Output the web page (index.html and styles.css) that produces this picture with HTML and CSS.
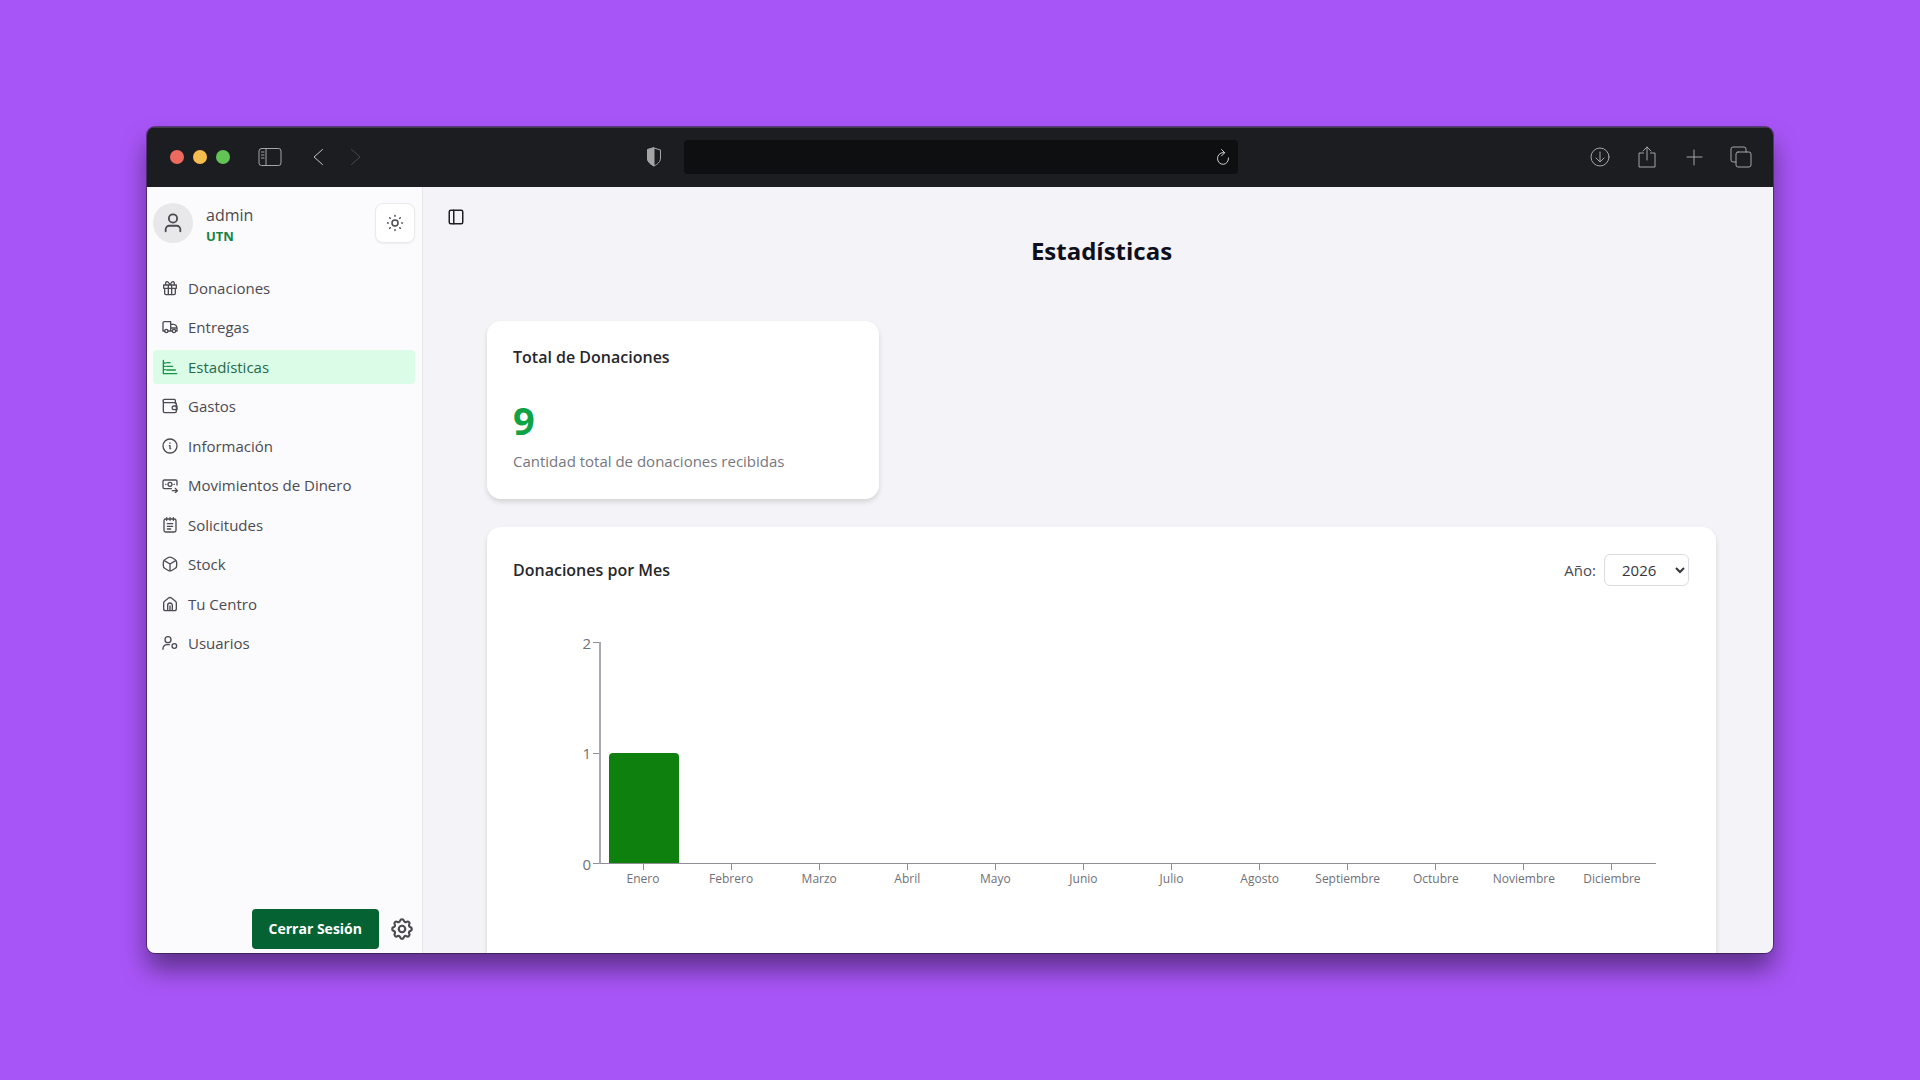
FILE: index.html
```html
<!DOCTYPE html>
<html lang="es">

<head>
    <meta charset="UTF-8">
    <meta name="viewport" content="width=device-width, initial-scale=1.0">
    <title>Estadísticas</title>
    <link rel="stylesheet" href="styles.css">
</head>

<body>
    <div class="window">
        <header class="toolbar">
            <div class="toolbar-left">
                <div class="dots">
                    <span class="dot close"></span>
                    <span class="dot min"></span>
                    <span class="dot max"></span>
                </div>
                <button class="tool tool-panel" aria-label="Barra lateral">
                    <svg width="24" height="20" viewBox="0 0 24 20"><rect x="1" y="1.500" width="22" height="17" rx="2.500"/><path d="M8 1.500v17M3.500 5H6M3.500 8H6M3.500 11H6"/></svg>
                </button>
                <button class="tool tool-back" aria-label="Atrás">
                    <svg width="12" height="18" viewBox="0 0 12 18"><path d="M10.500 1.500 2 9l8.500 7.500"/></svg>
                </button>
                <button class="tool tool-next" aria-label="Adelante" disabled>
                    <svg width="12" height="18" viewBox="0 0 12 18"><path d="M1.500 1.500 10 9l-8.500 7.500"/></svg>
                </button>
                <svg class="shield" width="16" height="20" viewBox="0 0 16 20"><path d="M8 1 14.500 3v8c0 4-3 6-6.500 8-3.500-2-6.500-4-6.500-8V3Z"/><path class="fill" d="M8 1v18c-3.500-2-6.500-4-6.500-8V3Z"/></svg>
            </div>
            <div class="address">
                <input type="text" class="address-input" aria-label="Dirección">
                <button class="tool reload" aria-label="Recargar">
                    <svg width="14" height="18" viewBox="0 0 14 18"><path d="M12.500 10A5.500 5.800 0 1 1 7 4.700H8.500M5.500 1.500l3.200 3.200-3.200 3.200"/></svg>
                </button>
            </div>
            <div class="toolbar-right">
                <button class="tool" aria-label="Descargas">
                    <svg width="22" height="22" viewBox="0 0 22 22"><circle cx="11" cy="11" r="9"/><path d="M11 6v9.500M7 12l4 4 4-4"/></svg>
                </button>
                <button class="tool" aria-label="Compartir">
                    <svg width="22" height="24" viewBox="0 0 22 24"><path d="M7.500 8H3v14h16V8h-4.500M11 15V2M7 6l4-4 4 4"/></svg>
                </button>
                <button class="tool" aria-label="Nueva pestaña">
                    <svg width="22" height="22" viewBox="0 0 22 22"><path d="M11 4v15M4 11h15"/></svg>
                </button>
                <button class="tool" aria-label="Pestañas">
                    <svg width="22" height="22" viewBox="0 0 22 22"><rect x="6" y="6" width="15" height="15" rx="2"/><path d="M6 16H3a2 2 0 0 1-2-2V3a2 2 0 0 1 2-2h11a2 2 0 0 1 2 2v3"/></svg>
                </button>
            </div>
        </header>

        <div class="app">
            <aside class="sidebar">
                <div class="profile">
                    <span class="avatar">
                        <svg class="icon" width="22" height="22" viewBox="0 0 24 24"><circle cx="12" cy="7" r="4.500"/><path d="M4 21v-2a4 4 0 0 1 4-4h8a4 4 0 0 1 4 4v2"/></svg>
                    </span>
                    <div class="profile-text">
                        <span class="profile-name">admin</span>
                        <span class="profile-center">UTN</span>
                    </div>
                    <button class="theme-btn" aria-label="Cambiar tema">
                        <svg class="icon" width="18" height="18" viewBox="0 0 24 24"><circle cx="12" cy="12" r="4"/><path d="M12 2v1M12 21v1M2 12h1M21 12h1M4.900 4.900l.8.8M18.300 18.300l.8.8M4.900 19.100l.8-.8M18.300 5.700l.8-.8"/></svg>
                    </button>
                </div>

                <nav class="menu">
                    <a href="#" class="menu-item">
                        <svg class="icon" width="16" height="16" viewBox="0 0 24 24"><path d="M2.500 7.500h19v5h-19zM4 12.500h16v7.500a2 2 0 0 1-2 2H6a2 2 0 0 1-2-2zM9.500 7.500V22M14.500 7.500V22M12 7.500C10 3 8.500 2 7 2.500 4.500 3.500 5 7 7.500 7.500M12 7.500C14 3 15.500 2 17 2.500c2.500 1 2 4.500-.5 5"/></svg>
                        Donaciones
                    </a>
                    <a href="#" class="menu-item">
                        <svg class="icon" width="16" height="16" viewBox="0 0 24 24"><circle cx="6.500" cy="18" r="2.500"/><circle cx="18" cy="18" r="2.500"/><path d="M4 18H1.500V6a2 2 0 0 1 2-2H13v14M9 18h6.500M13 8h4.500c3 0 5 3.500 5 6v4h-2M13 13.500h9"/></svg>
                        Entregas
                    </a>
                    <a href="#" class="menu-item active">
                        <svg class="icon" width="16" height="16" viewBox="0 0 24 24"><path d="M2 2v20h20M2 6h3M2 11h3M2 16h3M7 5.500h5M7 11h9M7 16.500h13"/></svg>
                        Estadísticas
                    </a>
                    <a href="#" class="menu-item">
                        <svg class="icon" width="16" height="16" viewBox="0 0 24 24"><path d="M20 8V3.500A1.500 1.500 0 0 0 18.500 2H4a2 2 0 0 0 0 5h16a1.500 1.500 0 0 1 1.500 1.500V20a2 2 0 0 1-2 2H4a2 2 0 0 1-2-2V4M22.500 12H18a2.500 2.500 0 0 0 0 5.500h4.500z"/></svg>
                        Gastos
                    </a>
                    <a href="#" class="menu-item">
                        <svg class="icon" width="16" height="16" viewBox="0 0 24 24"><circle cx="12" cy="12" r="10.500"/><path d="M12 7.500v.5M11 11.500h1V16h1"/></svg>
                        Información
                    </a>
                    <a href="#" class="menu-item">
                        <svg class="icon" width="16" height="16" viewBox="0 0 24 24"><path d="M14 17.500H3.500a2 2 0 0 1-2-2v-9a2 2 0 0 1 2-2h17a2 2 0 0 1 2 2V12M5.500 11h.5M18 11h.5M15.500 20.500h7M20 17l3 3.500-3 3"/><circle cx="12" cy="11" r="3"/></svg>
                        Movimientos de Dinero
                    </a>
                    <a href="#" class="menu-item">
                        <svg class="icon" width="16" height="16" viewBox="0 0 24 24"><rect x="3" y="3" width="18" height="19.500" rx="2.500"/><path d="M7 1v4M12 1v4M17 1v4M8 10h8M8 14h8M8 18h5"/></svg>
                        Solicitudes
                    </a>
                    <a href="#" class="menu-item">
                        <svg class="icon" width="16" height="16" viewBox="0 0 24 24"><path d="M9.500 2.300a5 5 0 0 1 5 0l5 2.900A5 5 0 0 1 22 9.500v5a5 5 0 0 1-2.500 4.300l-5 2.900a5 5 0 0 1-5 0l-5-2.900A5 5 0 0 1 2 14.500v-5a5 5 0 0 1 2.500-4.300zM3.500 7 12 12l8.500-5M12 12v10"/></svg>
                        Stock
                    </a>
                    <a href="#" class="menu-item">
                        <svg class="icon" width="16" height="16" viewBox="0 0 24 24"><path d="M2.500 10.500c0-1 .5-2 1.300-2.600l6-4.800a3.500 3.500 0 0 1 4.400 0l6 4.800c.8.600 1.300 1.600 1.300 2.600V19a3 3 0 0 1-3 3h-13a3 3 0 0 1-3-3zM8.500 22v-8a3.500 3.500 0 0 1 7 0v8M12 15v7"/></svg>
                        Tu Centro
                    </a>
                    <a href="#" class="menu-item">
                        <svg class="icon" width="16" height="16" viewBox="0 0 24 24"><circle cx="9" cy="7" r="4.500"/><path d="M1.500 21.500v-1a6 6 0 0 1 6-6H11"/><circle cx="18.500" cy="16.500" r="3.500"/></svg>
                        Usuarios
                    </a>
                </nav>

                <div class="sidebar-footer">
                    <button class="logout-btn">Cerrar Sesión</button>
                    <button class="settings-btn" aria-label="Configuración">
                        <svg class="icon" width="26" height="26" viewBox="0 0 24 24"><path d="M10.300 4.300c.4-1.700 3-1.700 3.400 0a1.700 1.700 0 0 0 2.600 1.100c1.500-1 3.300.8 2.400 2.400a1.700 1.700 0 0 0 1 2.500c1.800.4 1.800 3 0 3.400a1.700 1.700 0 0 0-1 2.600c.9 1.500-.9 3.300-2.400 2.400a1.700 1.700 0 0 0-2.600 1c-.4 1.800-3 1.800-3.400 0a1.700 1.700 0 0 0-2.600-1c-1.500.9-3.300-.9-2.400-2.400a1.700 1.700 0 0 0-1-2.600c-1.800-.4-1.800-3 0-3.400a1.700 1.700 0 0 0 1-2.500C4.400 6.200 6.200 4.400 7.700 5.400a1.700 1.700 0 0 0 2.600-1.100Z"/><circle cx="12" cy="12" r="3"/></svg>
                    </button>
                </div>
            </aside>

            <main class="content">
                <button class="toggle-btn" aria-label="Ocultar menú">
                    <svg class="icon" width="18" height="18" viewBox="0 0 24 24"><rect x="3" y="3" width="18" height="18" rx="2"/><path d="M9 3v18"/></svg>
                </button>
                <div class="page">
                    <h1 class="page-title">Estadísticas</h1>

                    <section class="card total-card">
                        <h2 class="card-title">Total de Donaciones</h2>
                        <p class="total-number">9</p>
                        <p class="total-text">Cantidad total de donaciones recibidas</p>
                    </section>

                    <section class="card chart-card">
                        <div class="chart-header">
                            <h2 class="card-title">Donaciones por Mes</h2>
                            <div class="year">
                                <label for="year">Año:</label>
                                <select id="year" class="year-select">
                                    <option>2026</option>
                                </select>
                            </div>
                        </div>
                        <div class="chart">
                            <div class="y-axis">
                                <span>2</span>
                                <span>1</span>
                                <span>0</span>
                            </div>
                            <div class="plot">
                                <div class="bar" style="height: 50%"></div>
                            </div>
                            <div class="x-axis">
                                <span>Enero</span>
                                <span>Febrero</span>
                                <span>Marzo</span>
                                <span>Abril</span>
                                <span>Mayo</span>
                                <span>Junio</span>
                                <span>Julio</span>
                                <span>Agosto</span>
                                <span>Septiembre</span>
                                <span>Octubre</span>
                                <span>Noviembre</span>
                                <span>Diciembre</span>
                            </div>
                        </div>
                    </section>
                </div>
            </main>
        </div>
    </div>
</body>

</html>
```

FILE: styles.css
```css
* {
    box-sizing: border-box;
}

body {
    margin: 0;
    height: 100vh;
    padding: 127px 147px;
    display: flex;
    background-color: #a855f7;
    color: #4b4b50;
    font-family: "Open Sans", "Noto Sans", sans-serif;
    font-size: 15px;
    line-height: 20px;
}

h1,
h2,
p {
    margin: 0;
}

button {
    border: 0;
    padding: 0;
    background: none;
    color: inherit;
    font: inherit;
    display: flex;
    align-items: center;
    justify-content: center;
}

svg {
    display: block;
    flex: none;
    fill: none;
    stroke: currentColor;
    stroke-linecap: round;
    stroke-linejoin: round;
}

/* window */
.window {
    flex: 1;
    min-width: 0;
    display: flex;
    flex-direction: column;
    overflow: hidden;
    border-radius: 8px;
    box-shadow: 0 0 0 1px rgba(30, 20, 40, 0.5), 0 16px 26px rgba(0, 0, 0, 0.45);
}

.toolbar {
    flex: none;
    height: 60px;
    display: grid;
    grid-template-columns: 1fr 35% 1fr;
    align-items: center;
    column-gap: 22px;
    padding: 0 21px 2px 23px;
    background-color: #1c1d20;
    border-top: 1px solid #404045;
    color: #a5a5a8;
}

.toolbar-left,
.toolbar-right,
.dots {
    display: flex;
    align-items: center;
}

.dots {
    gap: 9px;
}

.dot {
    width: 14px;
    height: 14px;
    border-radius: 50%;
}

.close {
    background-color: #ee6a5f;
}

.min {
    background-color: #f5bd4f;
}

.max {
    background-color: #61c454;
}

.tool-panel {
    margin-left: 28px;
}

.tool-back {
    margin-left: 30px;
    color: #c4c4c6;
}

.tool-next {
    margin-left: 26px;
    color: #48494c;
}

.shield {
    margin-left: auto;
}

.shield .fill {
    fill: currentColor;
}

.address {
    display: flex;
    align-items: center;
    height: 34px;
    padding-right: 8px;
    border-radius: 4px;
    background-color: #0e0f11;
}

.address-input {
    flex: 1;
    min-width: 0;
    border: 0;
    outline: 0;
    background: none;
    color: #d0d0d2;
    font: inherit;
}

.reload {
    color: #d0d0d2;
}

.toolbar-right {
    justify-content: flex-end;
    gap: 25px;
}

.app {
    flex: 1;
    min-height: 0;
    display: flex;
}

/* sidebar */
.sidebar {
    flex: none;
    width: 276px;
    display: flex;
    flex-direction: column;
    padding: 16px 7px 4px 6px;
    background-color: #fbfafd;
    border-right: 1px solid #e8e6eb;
}

.icon {
    stroke-width: 2;
}

.profile {
    display: flex;
    align-items: flex-start;
    gap: 13px;
}

.avatar {
    width: 40px;
    height: 40px;
    display: flex;
    align-items: center;
    justify-content: center;
    border-radius: 50%;
    background-color: #e8e8ea;
}

.profile-text {
    display: flex;
    flex-direction: column;
}

.profile-name {
    font-size: 16px;
    line-height: 24px;
}

.profile-center {
    color: #158443;
    font-size: 13px;
    font-weight: 700;
    line-height: 18px;
}

.theme-btn {
    width: 40px;
    height: 40px;
    margin-left: auto;
    border: 1px solid #ebe9ee;
    border-radius: 8px;
    background-color: #fff;
    box-shadow: 0 1px 2px rgba(0, 0, 0, 0.06);
}

.menu {
    min-height: 389px;
    margin-top: 26px;
    display: flex;
    flex-direction: column;
    justify-content: space-between;
}

.menu-item {
    height: 34px;
    display: flex;
    align-items: center;
    gap: 10px;
    padding-left: 9px;
    border-radius: 4px;
    color: #4b4b50;
    text-decoration: none;
}

.menu-item.active {
    background-color: #dbfce7;
    color: #28694a;
}

.menu-item.active .icon {
    color: #16934a;
}

.sidebar-footer {
    display: flex;
    align-items: center;
    justify-content: flex-end;
    gap: 10px;
    margin-top: auto;
}

.logout-btn {
    height: 40px;
    padding: 0 17px;
    border-radius: 4px;
    background-color: #046233;
    color: #fff;
    font-size: 14px;
    font-weight: 700;
}

/* content */
.content {
    flex: 1;
    min-width: 0;
    overflow: hidden;
    padding: 21px 57px 0 24px;
    background-color: #f4f3f7;
}

.toggle-btn {
    color: #202024;
}

.page {
    display: flex;
    flex-direction: column;
    padding-left: 40px;
}

.page-title {
    margin-top: 7px;
    color: #0f0f1c;
    font-size: 24px;
    font-weight: 700;
    line-height: 36px;
    text-align: center;
}

.card {
    border-radius: 14px;
    background-color: #fff;
    box-shadow: 0 3px 5px rgba(0, 0, 0, 0.13);
}

.card-title {
    color: #27272c;
    font-size: 16px;
    font-weight: 600;
    line-height: 24px;
}

.total-card {
    width: 392px;
    margin-top: 52px;
    padding: 24px 26px 28px;
}

.total-number {
    margin-top: 29px;
    color: #0ea345;
    font-size: 38px;
    font-weight: 700;
    line-height: 44px;
}

.total-text {
    margin-top: 9px;
    color: #77777e;
}

.chart-card {
    min-height: 520px;
    margin-top: 28px;
    padding: 27px 27px 27px 26px;
}

.chart-header,
.year {
    display: flex;
    align-items: center;
}

.chart-header {
    justify-content: space-between;
}

.year {
    gap: 8px;
}

.year-select {
    width: 85px;
    height: 32px;
    padding-left: 13px;
    border: 1px solid #dddbe2;
    border-radius: 6px;
    background-color: #fff;
    color: #35353a;
    font: inherit;
}

.chart {
    display: grid;
    grid-template-columns: 86px 1fr;
    margin-top: 56px;
    padding-right: 33px;
    color: #707077;
}

.y-axis {
    height: 222px;
    display: flex;
    flex-direction: column;
    justify-content: space-between;
    align-items: flex-end;
    line-height: 0;
}

/* value followed by its tick */
.y-axis span {
    display: flex;
    align-items: center;
    gap: 2px;
    height: 1px;
}

.y-axis span::after {
    content: "";
    width: 6px;
    height: 1px;
    background-color: #8f8f95;
}

.plot {
    display: grid;
    grid-template-columns: repeat(12, 1fr);
    align-items: end;
    border-left: 2px solid #aaa9af;
    border-bottom: 1px solid #8f8f95;
}

.bar {
    margin: 0 10px 0 8px;
    border-radius: 4px 4px 0 0;
    background-color: #0d800d;
}

.x-axis {
    grid-column: 2;
    display: grid;
    grid-template-columns: repeat(12, 1fr);
    font-size: 12px;
    line-height: 18px;
}

.x-axis span {
    display: flex;
    flex-direction: column;
    align-items: center;
}

.x-axis span::before {
    content: "";
    width: 1px;
    height: 6px;
    background-color: #8f8f95;
}
```
